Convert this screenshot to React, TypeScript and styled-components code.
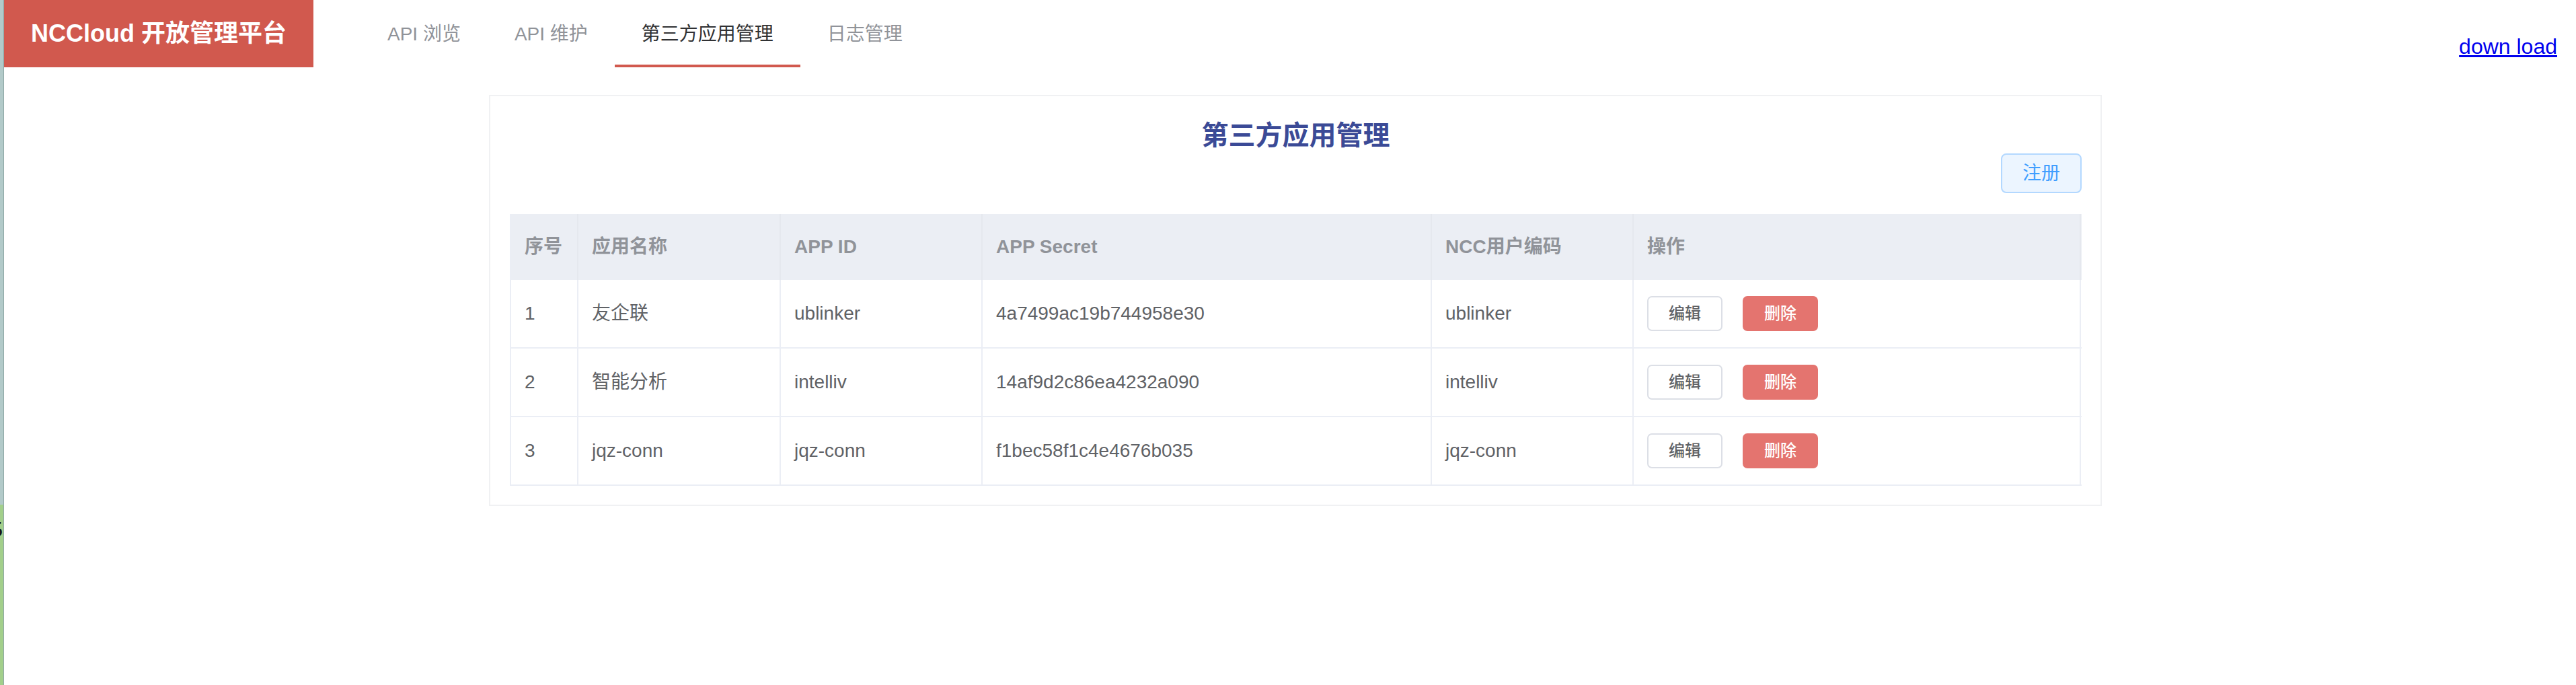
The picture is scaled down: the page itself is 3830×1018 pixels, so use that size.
import React from "react";
import styled, { createGlobalStyle } from "styled-components";

const GlobalStyle = createGlobalStyle`
  html, body, #root { margin: 0; padding: 0; height: 100%; }
  body {
    background: #ffffff;
    font-family: "Liberation Sans", "Noto Sans CJK SC", sans-serif;
  }
  * { box-sizing: border-box; }
`;

const Page = styled.div`
  display: flex;
  min-height: 100vh;
`;

const EdgeStrip = styled.div`
  width: 6px;
  flex: none;
  display: flex;
  flex-direction: column;
  border-right: 1px solid #8fa8a6;
  overflow: hidden;
`;

const EdgeTop = styled.div`
  height: 750px;
  flex: none;
  background: #b2cac9;
`;

const EdgeBottom = styled.div`
  flex: 1;
  background: #a2cf8b;
  overflow: hidden;
`;

const EdgeGlyph = styled.div`
  margin: 20px 0 0 -12px;
  font-family: "Liberation Serif", serif;
  font-size: 32px;
  line-height: 32px;
  color: #111111;
`;

const Main = styled.div`
  flex: 1;
  display: flex;
  flex-direction: column;
  min-width: 0;
`;

const Header = styled.header`
  display: flex;
  height: 100px;
`;

const Logo = styled.div`
  width: 460px;
  flex: none;
  display: flex;
  align-items: center;
  justify-content: center;
  background: #d1594e;
  color: #ffffff;
  font-size: 36px;
  line-height: 36px;
  font-weight: bold;
  white-space: nowrap;
`;

const Nav = styled.nav`
  display: flex;
  margin-left: 70px;
`;

const Tab = styled.a<{ $active?: boolean }>`
  display: flex;
  align-items: center;
  height: 100px;
  padding: 6px 40px 0;
  border-bottom: 4px solid ${(p) => (p.$active ? "#d1594e" : "transparent")};
  font-size: 28px;
  line-height: 28px;
  color: ${(p) => (p.$active ? "#303133" : "#909399")};
  text-decoration: none;
  white-space: nowrap;
  cursor: pointer;
`;

const DownLoad = styled.a`
  margin-left: auto;
  margin-right: 28px;
  margin-top: 53px;
  align-self: flex-start;
  font-size: 32px;
  line-height: 32px;
  color: #0000ee;
  text-decoration: underline;
`;

const Card = styled.section`
  width: 2398px;
  margin: 41px 0 0 721px;
  padding: 0 28px 28px 29px;
  border: 2px solid #f0f1f3;
  background: #ffffff;
`;

const Title = styled.h2`
  margin: 38px 0 0;
  text-align: center;
  font-size: 40px;
  line-height: 40px;
  font-weight: bold;
  color: #3b4a96;
`;

const Toolbar = styled.div`
  display: flex;
  justify-content: flex-end;
  margin-top: 7px;
`;

const RegisterButton = styled.button`
  width: 120px;
  height: 59px;
  padding: 0;
  border: 2px solid #b3d8ff;
  border-radius: 8px;
  background: #ecf5ff;
  color: #409eff;
  font-family: inherit;
  font-size: 28px;
  line-height: 28px;
  cursor: pointer;
`;

const columns = "100px 301px 300px 668px 300px 665px";

const Table = styled.div`
  margin-top: 31px;
  border-left: 2px solid #ebeef5;
`;

const HeadRow = styled.div`
  display: grid;
  grid-template-columns: ${columns};
  height: 98px;
  background: #ebeef4;
`;

const BodyRow = styled.div`
  display: grid;
  grid-template-columns: ${columns};
  height: 102px;
  border-bottom: 2px solid #ebeef5;
`;

const HeadCell = styled.div`
  display: flex;
  align-items: center;
  padding: 0 20px;
  border-right: 2px solid #e5e8ee;
  font-size: 28px;
  line-height: 28px;
  font-weight: bold;
  color: #909399;
  white-space: nowrap;
`;

const Cell = styled.div`
  display: flex;
  align-items: center;
  gap: 30px;
  padding: 0 20px;
  border-right: 2px solid #ebeef5;
  font-size: 28px;
  line-height: 28px;
  color: #606266;
  white-space: nowrap;
`;

const ActionButton = styled.button<{ $danger?: boolean }>`
  width: 112px;
  height: 52px;
  padding: 0;
  border: 2px solid ${(p) => (p.$danger ? "#e4746f" : "#dcdfe6")};
  border-radius: 7px;
  background: ${(p) => (p.$danger ? "#e4746f" : "#ffffff")};
  color: ${(p) => (p.$danger ? "#ffffff" : "#606266")};
  font-family: inherit;
  font-size: 24px;
  line-height: 24px;
  font-weight: 500;
  cursor: pointer;
`;

const rows = [
  { no: 1, name: "友企联", id: "ublinker", secret: "4a7499ac19b744958e30", user: "ublinker" },
  { no: 2, name: "智能分析", id: "intelliv", secret: "14af9d2c86ea4232a090", user: "intelliv" },
  { no: 3, name: "jqz-conn", id: "jqz-conn", secret: "f1bec58f1c4e4676b035", user: "jqz-conn" },
];

const heads = ["序号", "应用名称", "APP ID", "APP Secret", "NCC用户编码", "操作"];

export default function App() {
  return (
    <Page>
      <GlobalStyle />
      <EdgeStrip>
        <EdgeTop />
        <EdgeBottom>
          <EdgeGlyph>5</EdgeGlyph>
        </EdgeBottom>
      </EdgeStrip>
      <Main>
        <Header>
          <Logo>NCCloud 开放管理平台</Logo>
          <Nav>
            <Tab>API 浏览</Tab>
            <Tab>API 维护</Tab>
            <Tab $active>第三方应用管理</Tab>
            <Tab>日志管理</Tab>
          </Nav>
          <DownLoad href="#">down load</DownLoad>
        </Header>
        <Card>
          <Title>第三方应用管理</Title>
          <Toolbar>
            <RegisterButton>注册</RegisterButton>
          </Toolbar>
          <Table>
            <HeadRow>
              {heads.map((h) => (
                <HeadCell key={h}>{h}</HeadCell>
              ))}
            </HeadRow>
            {rows.map((r) => (
              <BodyRow key={r.no}>
                <Cell>{r.no}</Cell>
                <Cell>{r.name}</Cell>
                <Cell>{r.id}</Cell>
                <Cell>{r.secret}</Cell>
                <Cell>{r.user}</Cell>
                <Cell>
                  <ActionButton>编辑</ActionButton>
                  <ActionButton $danger>删除</ActionButton>
                </Cell>
              </BodyRow>
            ))}
          </Table>
        </Card>
      </Main>
    </Page>
  );
}
